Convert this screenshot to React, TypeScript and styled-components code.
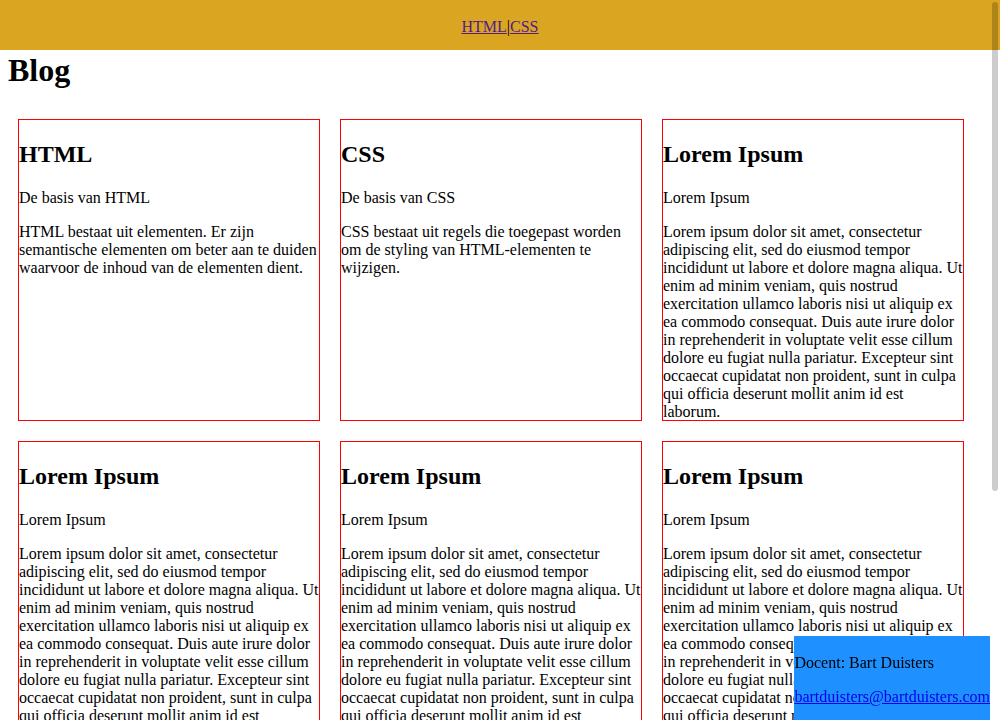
import React from "react";
import styled, { createGlobalStyle } from "styled-components";

const GlobalStyle = createGlobalStyle`
  html, body {
    margin: 0;
    padding: 0;
    background: #ffffff;
    font-family: "Liberation Serif", "Times New Roman", serif;
    font-size: 16px;
    color: #000000;
  }
`;

const Header = styled.header`
  background: #daa520;
  padding: 18px 0 14px;
  text-align: center;
  line-height: normal;
`;

const NavLink = styled.a`
  color: #551a8b;
  text-decoration: underline;
`;

const Main = styled.main`
  padding: 0 8px 8px;
`;

const Title = styled.h1`
  font-size: 32px;
  font-weight: bold;
  margin: 2px 0 20.44px;
`;

const Grid = styled.div`
  display: flex;
  flex-wrap: wrap;
  align-items: flex-start;
`;

const Card = styled.article`
  width: 300px;
  height: 300px;
  margin: 10px;
  border: 1px solid red;
`;

const CardTitle = styled.h2`
  font-size: 24px;
  font-weight: bold;
  margin: 20.92px 0;
`;

const CardText = styled.p`
  margin: 16px 0;
`;

const Footer = styled.footer`
  position: fixed;
  right: 10px;
  bottom: 0;
  padding-top: 2px;
  background: #1e90ff;
`;

const FooterText = styled.p`
  margin: 16px 0;

  &:last-child {
    margin-bottom: 14px;
  }
`;

const MailLink = styled.a`
  color: #0000ee;
  text-decoration: underline;
`;

const ScrollThumb = styled.div`
  position: fixed;
  top: 2px;
  right: 2px;
  width: 6px;
  height: 489px;
  border-radius: 3px;
  background: rgba(0, 0, 0, 0.2);
  pointer-events: none;
`;

const LOREM =
  "Lorem ipsum dolor sit amet, consectetur adipiscing elit, sed do eiusmod tempor incididunt ut labore et dolore magna aliqua. Ut enim ad minim veniam, quis nostrud exercitation ullamco laboris nisi ut aliquip ex ea commodo consequat. Duis aute irure dolor in reprehenderit in voluptate velit esse cillum dolore eu fugiat nulla pariatur. Excepteur sint occaecat cupidatat non proident, sunt in culpa qui officia deserunt mollit anim id est laborum.";

const posts = [
  {
    title: "HTML",
    sub: "De basis van HTML",
    body: "HTML bestaat uit elementen. Er zijn semantische elementen om beter aan te duiden waarvoor de inhoud van de elementen dient.",
  },
  {
    title: "CSS",
    sub: "De basis van CSS",
    body: "CSS bestaat uit regels die toegepast worden om de styling van HTML-elementen te wijzigen.",
  },
  ...Array.from({ length: 7 }, () => ({
    title: "Lorem Ipsum",
    sub: "Lorem Ipsum",
    body: LOREM,
  })),
];

export default function App() {
  return (
    <>
      <GlobalStyle />
      <Header>
        <NavLink href="#html">HTML</NavLink>|<NavLink href="#css">CSS</NavLink>
      </Header>
      <Main>
        <Title>Blog</Title>
        <Grid>
          {posts.map((p, i) => (
            <Card key={i}>
              <CardTitle>{p.title}</CardTitle>
              <CardText>{p.sub}</CardText>
              <CardText>{p.body}</CardText>
            </Card>
          ))}
        </Grid>
      </Main>
      <Footer>
        <FooterText>Docent: Bart Duisters</FooterText>
        <FooterText>
          <MailLink href="mailto:bartduisters@bartduisters.com">
            bartduisters@bartduisters.com
          </MailLink>
        </FooterText>
      </Footer>
      <ScrollThumb aria-hidden="true" />
    </>
  );
}
